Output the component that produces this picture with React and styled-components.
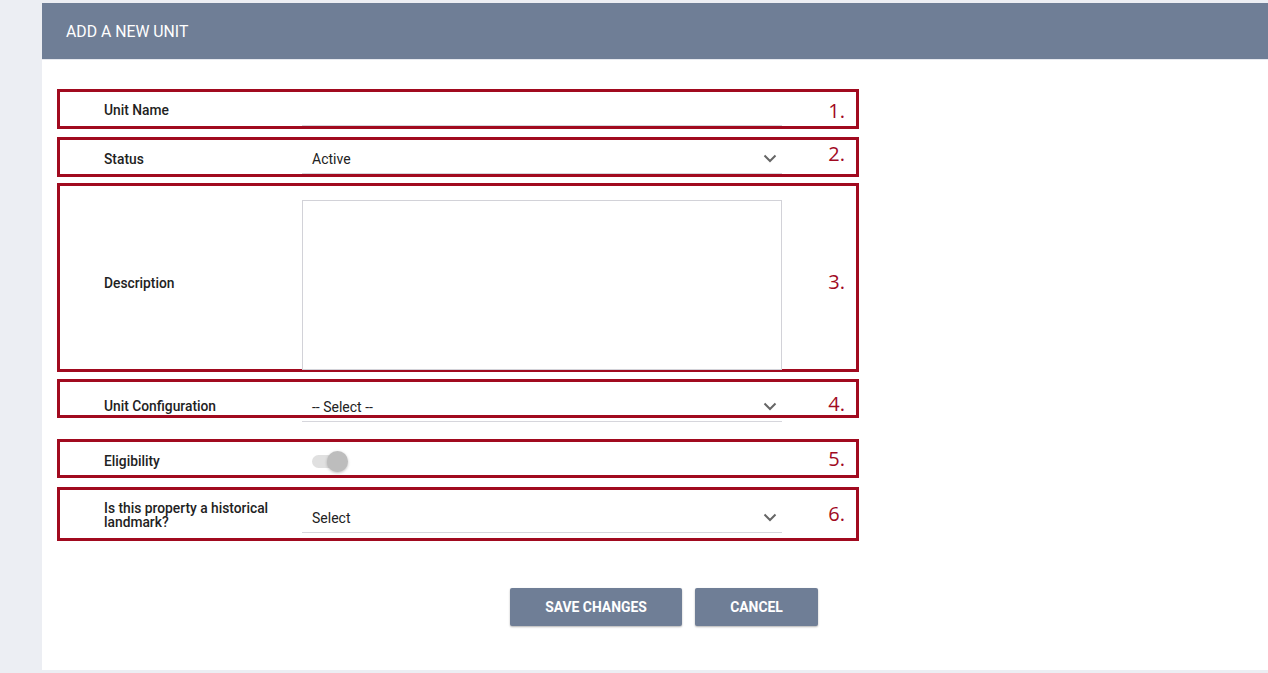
import React from "react";
import styled, { createGlobalStyle } from "styled-components";

const Global = createGlobalStyle`
  html, body { margin: 0; padding: 0; }
  body {
    background: #eceef3;
    font-family: Roboto, "Liberation Sans", Arial, sans-serif;
    overflow: hidden;
  }
`;

const RED = "#a10a1f";
const SLATE = "#6f7e96";

const Page = styled.div`
  height: 673px;
  padding: 3px 0 3px 42px;
  box-sizing: border-box;
`;

const Panel = styled.section`
  background: #fff;
  height: 667px;
  display: flex;
  flex-direction: column;
`;

const Header = styled.header`
  height: 56px;
  background: ${SLATE};
  display: flex;
  align-items: center;
  padding-left: 24px;
  color: #fff;
  font-size: 15.8px;
  border-bottom: 1px solid #e6e8ee;
`;

const Form = styled.form`
  width: 802px;
  margin: 29px 0 0 15px;
  display: flex;
  flex-direction: column;
`;

const Row = styled.div`
  box-sizing: border-box;
  margin-top: ${(p) => p.$gap || 0}px;
  height: ${(p) => p.$h}px;
  border: 3px solid ${RED};
  display: grid;
  grid-template-columns: 198px 480px 1fr;
  align-items: center;
  padding-left: 44px;
  padding-right: 11px;
`;

const Label = styled.label`
  font-size: 13.8px;
  font-weight: 500;
  color: #222;
  line-height: ${(p) => (p.$multi ? "14px" : "16px")};
  align-self: center;
  margin-top: ${(p) => p.$mt || 0}px;
`;

const Num = styled.span`
  justify-self: end;
  font-family: "Open Sans", "Liberation Sans", sans-serif;
  font-size: 20px;
  line-height: 24px;
  color: ${RED};
  align-self: center;
  margin-top: ${(p) => p.$mt || 0}px;
`;

const Field = styled.div`
  align-self: end;
  height: 30px;
  box-sizing: border-box;
  border-bottom: 1px solid #d6d6dc;
  display: flex;
  align-items: center;
  justify-content: space-between;
  padding: 0 5px 0 10px;
  font-size: 14px;
  color: #222;
  margin-bottom: ${(p) => p.$mb || 0}px;
`;

const TextArea = styled.div`
  align-self: start;
  margin-top: 14px;
  height: 170px;
  box-sizing: border-box;
  border: 1px solid #d2d2d8;
`;

const ToggleCell = styled.div`
  margin-top: 6px;
`;

const Track = styled.div`
  position: relative;
  margin-left: 10px;
  width: 28px;
  height: 13px;
  border-radius: 7px;
  background: #e0e0e0;
`;

const Thumb = styled.div`
  position: absolute;
  top: -4px;
  right: -8px;
  width: 21px;
  height: 21px;
  border-radius: 50%;
  background: #bdbdbd;
  box-shadow: 0 1px 3px rgba(0, 0, 0, 0.25);
`;

const ButtonBar = styled.div`
  display: flex;
  gap: 13px;
  margin: 47px 0 0 468px;
`;

const Button = styled.button`
  width: ${(p) => p.$w}px;
  height: 38px;
  background: ${SLATE};
  color: #fff;
  border: none;
  border-radius: 2px;
  font-family: Roboto, "Liberation Sans", sans-serif;
  font-weight: 700;
  font-size: 13.9px;
  text-transform: uppercase;
  box-shadow: 0 1px 2px rgba(0, 0, 0, 0.3);
  cursor: pointer;
`;

const Chevron = () => (
  <svg width="14" height="9" viewBox="0 0 14 9">
    <path d="M1.5 1.5 L7 7 L12.5 1.5" fill="none" stroke="#666" strokeWidth="2" />
  </svg>
);

export default function App() {
  return (
    <>
      <Global />
      <Page>
        <Panel>
          <Header>ADD A NEW UNIT</Header>
          <Form>
            <Row $h={40}>
              <Label $mt={2}>Unit Name</Label>
              <Field />
              <Num $mt={4}>1.</Num>
            </Row>
            <Row $h={40} $gap={8}>
              <Label $mt={4}>Status</Label>
              <Field>
                Active
                <Chevron />
              </Field>
              <Num $mt={-6}>2.</Num>
            </Row>
            <Row $h={189} $gap={6}>
              <Label $mt={10}>Description</Label>
              <TextArea />
              <Num $mt={8}>3.</Num>
            </Row>
            <Row $h={39} $gap={7}>
              <Label $mt={14}>Unit Configuration</Label>
              <Field $mb={-6}>
                -- Select --
                <Chevron />
              </Field>
              <Num $mt={10}>4.</Num>
            </Row>
            <Row $h={39} $gap={21}>
              <Label $mt={4}>Eligibility</Label>
              <ToggleCell>
                <Track>
                  <Thumb />
                </Track>
              </ToggleCell>
              <Num>5.</Num>
            </Row>
            <Row $h={54} $gap={9}>
              <Label $multi $mt={2}>
                Is this property a historical
                <br />
                landmark?
              </Label>
              <Field $mb={5}>
                Select
                <Chevron />
              </Field>
              <Num>6.</Num>
            </Row>
          </Form>
          <ButtonBar>
            <Button $w={172}>Save Changes</Button>
            <Button $w={123}>Cancel</Button>
          </ButtonBar>
        </Panel>
      </Page>
    </>
  );
}
